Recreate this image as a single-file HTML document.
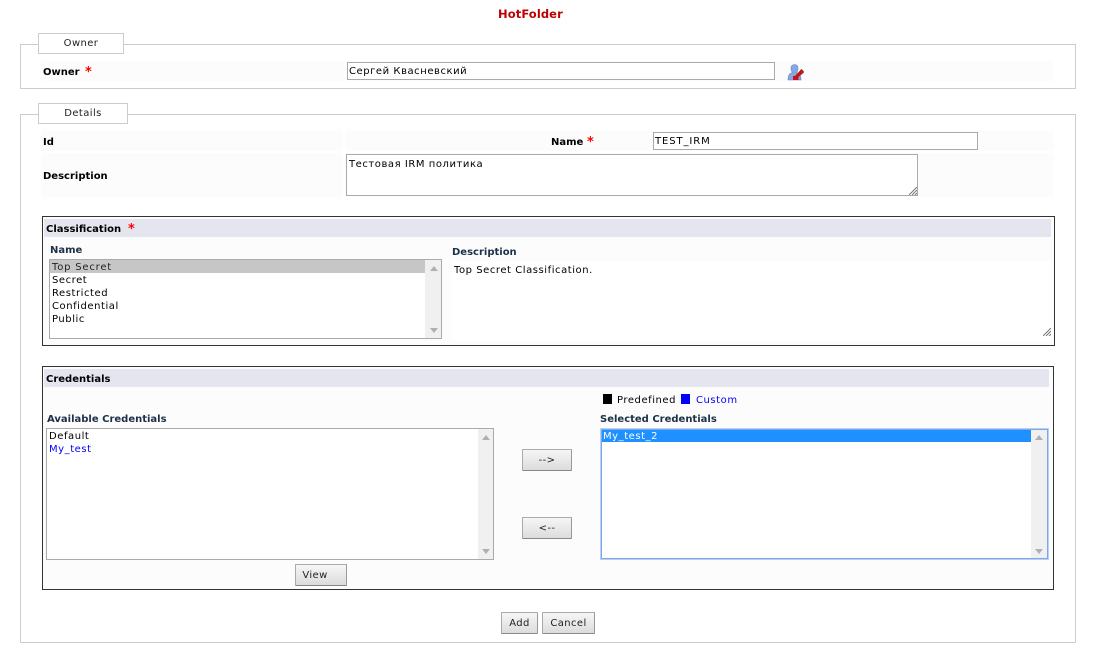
<!DOCTYPE html>
<html><head><meta charset="utf-8"><style>
html,body{margin:0;padding:0;background:#fff}
body{width:1098px;height:651px;position:relative;overflow:hidden;font-family:"DejaVu Sans","Liberation Sans",sans-serif;font-size:10px;color:#000;letter-spacing:.55px}
.a{position:absolute;box-sizing:border-box}
.t{position:absolute;white-space:nowrap;line-height:13px;height:13px;margin-top:1px}
.b{font-weight:bold;letter-spacing:0}
.l{color:#1c3048;font-weight:bold;letter-spacing:0}
.r{color:#f00;font-weight:bold;font-size:13px;letter-spacing:0}
.fs{border:1px solid #ccc}
.lg{border:1px solid #ccc;background:#fff;text-align:center;line-height:20px;color:#222;letter-spacing:.4px}
.row{background:#fcfcfc}
.inp{border:1px solid #aaa;background:#fff;padding-left:1px}
.btn{border:1px solid #aaa;border-bottom-color:#888;border-right-color:#999;background:linear-gradient(#f6f6f6,#dcdcdc);text-align:center;border-radius:1px;color:#222;letter-spacing:.4px}
.sb{background:#f0f0f0}
.up{position:absolute;width:0;height:0;border-left:4px solid transparent;border-right:4px solid transparent;border-bottom:5px solid #b0b0b0}
.dn{position:absolute;width:0;height:0;border-left:4px solid transparent;border-right:4px solid transparent;border-top:5px solid #b0b0b0}
</style></head><body>
<div class="t b" style="left:498px;top:7px;font-size:11.5px;color:#c00000;letter-spacing:.1px">HotFolder</div>

<div class="a fs" style="left:20px;top:44px;width:1056px;height:45px"></div>
<div class="a lg" style="left:38px;top:33px;width:86px;height:21px">Owner</div>
<div class="a row" style="left:41px;top:61px;width:303px;height:20px"></div>
<div class="a row" style="left:346px;top:61px;width:708px;height:20px"></div>
<div class="t b" style="left:43px;top:65px">Owner</div>
<div class="t r" style="left:85px;top:65px">*</div>
<div class="a inp" style="left:347px;top:62px;width:428px;height:18px;line-height:18px">Сергей Квасневский</div>
<svg class="a" style="left:787px;top:64px" width="18" height="17" viewBox="0 0 18 17"><path d="M1 16C1 11 3 9 5.500 8.500C4 7 4 5 4 4C4 1.500 6 .5 7.500 .5C9.500 .5 11 2 11 4C11 6 10.500 7.500 9.500 8.500C12 9 14 11 14 16Z" fill="#86a8e0" stroke="#5f85c8" stroke-width=".6"/><path d="M6 16V12H8L14 5.500L17 8.500L11.500 13V16Z" fill="#c81414"/><path d="M13 6.500L14.500 5L17 7.500L15.500 9Z" fill="#8a3020"/></svg>

<div class="a fs" style="left:20px;top:114px;width:1056px;height:529px"></div>
<div class="a lg" style="left:38px;top:103px;width:90px;height:21px">Details</div>
<div class="a row" style="left:41px;top:131px;width:302px;height:20px"></div>
<div class="a row" style="left:345px;top:131px;width:709px;height:20px"></div>
<div class="t b" style="left:43px;top:135px">Id</div>
<div class="t b" style="left:551px;top:135px">Name</div>
<div class="t r" style="left:587px;top:135px">*</div>
<div class="a inp" style="left:653px;top:132px;width:325px;height:18px;line-height:18px;letter-spacing:.9px">TEST_IRM</div>
<div class="a row" style="left:41px;top:153px;width:302px;height:44px"></div>
<div class="a row" style="left:345px;top:153px;width:709px;height:44px"></div>
<div class="t b" style="left:43px;top:169px">Description</div>
<div class="a inp" style="left:346px;top:154px;width:572px;height:42px;line-height:20px;padding-left:2px">Тестовая IRM политика</div>
<svg class="a" style="left:909px;top:187px" width="8" height="8"><path d="M0 8L8 0M3 8L8 3M6 8L8 6" stroke="#777" stroke-width="1"/></svg>

<div class="a" style="left:42px;top:216px;width:1013px;height:130px;border:1px solid #333;background:#fcfcfc"></div>
<div class="a" style="left:44px;top:219px;width:1007px;height:18px;background:#e5e5ef"></div>
<div class="t b" style="left:46px;top:222px">Classification</div>
<div class="t r" style="left:128px;top:222px">*</div>
<div class="t l" style="left:50px;top:243px">Name</div>
<div class="a" style="left:49px;top:259px;width:393px;height:80px;border:1px solid #aaa;background:#fff"></div>
<div class="a sb" style="left:425px;top:260px;width:16px;height:78px"></div>
<div class="up" style="left:430px;top:266px"></div>
<div class="dn" style="left:430px;top:328px"></div>
<div class="a" style="left:50px;top:260px;width:375px;height:13px;background:#c6c6c6"></div>
<div class="t" style="left:52px;top:260px;color:#222;letter-spacing:.8px">Top Secret</div>
<div class="t" style="left:52px;top:273px">Secret</div>
<div class="t" style="left:52px;top:286px">Restricted</div>
<div class="t" style="left:52px;top:299px">Confidential</div>
<div class="t" style="left:52px;top:312px">Public</div>
<div class="t l" style="left:452px;top:245px">Description</div>
<div class="a" style="left:452px;top:261px;width:601px;height:80px;background:#fff"></div>
<div class="t" style="left:454px;top:263px">Top Secret Classification.</div>
<svg class="a" style="left:1043px;top:328px" width="8" height="8"><path d="M0 8L8 0M3 8L8 3M6 8L8 6" stroke="#777" stroke-width="1"/></svg>

<div class="a" style="left:42px;top:366px;width:1012px;height:224px;border:1px solid #333;background:#fcfcfc"></div>
<div class="a" style="left:44px;top:369px;width:1005px;height:18px;background:#e5e5ef"></div>
<div class="t b" style="left:46px;top:372px">Credentials</div>
<div class="a" style="left:603px;top:394px;width:9px;height:10px;background:#000"></div>
<div class="t" style="left:617px;top:393px">Predefined</div>
<div class="a" style="left:681px;top:394px;width:9px;height:10px;background:#00f"></div>
<div class="t" style="left:696px;top:393px;color:#00f">Custom</div>
<div class="t l" style="left:47px;top:412px">Available Credentials</div>
<div class="t l" style="left:600px;top:412px">Selected Credentials</div>

<div class="a" style="left:46px;top:428px;width:448px;height:132px;border:1px solid #aaa;background:#fff"></div>
<div class="a sb" style="left:478px;top:429px;width:15px;height:130px"></div>
<div class="up" style="left:482px;top:435px"></div>
<div class="dn" style="left:482px;top:549px"></div>
<div class="t" style="left:49px;top:429px">Default</div>
<div class="t" style="left:49px;top:442px;color:#00f">My_test</div>

<div class="a" style="left:600px;top:428px;width:449px;height:132px;border:1px solid #b8d0f4;box-shadow:inset 0 0 0 1px #7fa6ea;background:#fff"></div>
<div class="a sb" style="left:1031px;top:430px;width:16px;height:128px"></div>
<div class="up" style="left:1035px;top:435px"></div>
<div class="dn" style="left:1035px;top:549px"></div>
<div class="a" style="left:602px;top:430px;width:429px;height:12px;background:#1e90ff"></div>
<div class="t" style="left:603px;top:429px;color:#fff">My_test_2</div>

<div class="a btn" style="left:522px;top:449px;width:50px;height:22px;line-height:21px">--&gt;</div>
<div class="a btn" style="left:522px;top:517px;width:50px;height:22px;line-height:21px">&lt;--</div>
<div class="a btn" style="left:295px;top:564px;width:52px;height:22px;line-height:21px;padding-right:12px">View</div>
<div class="a btn" style="left:501px;top:612px;width:37px;height:22px;line-height:22px">Add</div>
<div class="a btn" style="left:542px;top:612px;width:53px;height:22px;line-height:22px">Cancel</div>
</body></html>
